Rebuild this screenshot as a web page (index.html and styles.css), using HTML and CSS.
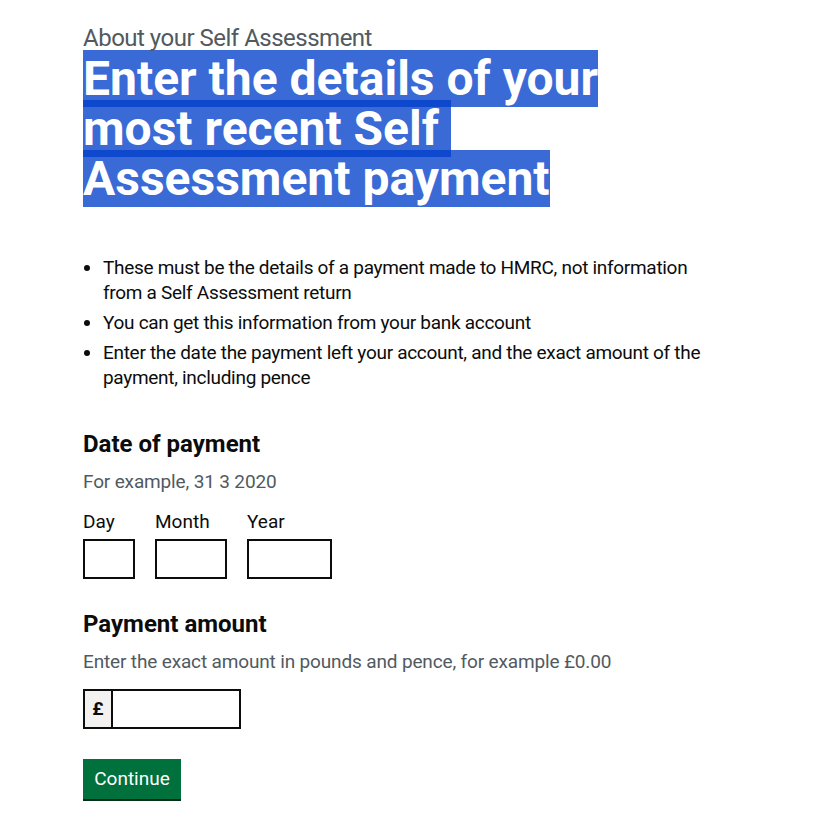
FILE: index.html
```html
<!DOCTYPE html>
<html lang="en">
<head>
<meta charset="utf-8">
<title>Enter the details of your most recent Self Assessment payment</title>
<link rel="stylesheet" href="styles.css">
</head>
<body>
<main class="page">
  <span class="caption">About your Self Assessment</span>
  <h1 class="heading">
    <span class="hl">Enter the details of your</span>
    <span class="hl">most recent Self </span>
    <span class="hl">Assessment payment</span>
  </h1>
  <ul class="bullets">
    <li>These must be the details of a payment made to HMRC, not information from a Self Assessment return</li>
    <li>You can get this information from your bank account</li>
    <li>Enter the date the payment left your account, and the exact amount of the payment, including pence</li>
  </ul>

  <fieldset class="fieldset">
    <legend class="legend">Date of payment</legend>
    <div class="hint">For example, 31 3 2020</div>
    <div class="date">
      <div class="date-item">
        <label class="label" for="d">Day</label>
        <input class="input w-day" id="d" type="text">
      </div>
      <div class="date-item">
        <label class="label" for="m">Month</label>
        <input class="input w-month" id="m" type="text">
      </div>
      <div class="date-item">
        <label class="label" for="y">Year</label>
        <input class="input w-year" id="y" type="text">
      </div>
    </div>
  </fieldset>

  <div class="group">
    <label class="legend" for="amt">Payment amount</label>
    <div class="hint hint-amt">Enter the exact amount in pounds and pence, for example £0.00</div>
    <div class="amount">
      <div class="prefix">£</div>
      <input class="input w-amount" id="amt" type="text">
    </div>
  </div>

  <button class="button" type="submit">Continue</button>
</main>
</body>
</html>
```

FILE: styles.css
```css
* { box-sizing: border-box; }
html, body { margin: 0; padding: 0; background: #fff; }
body {
  font-family: Roboto, "Liberation Sans", Arial, sans-serif;
  color: #0b0c0c;
}
.page {
  padding: 26px 0 0 83px;
}
.caption {
  display: block;
  font-size: 24px;
  line-height: 24px;
  letter-spacing: -0.5px;
  color: #505a5f;
  height: 28px;
}
.heading {
  margin: 0 0 51px 0;
  font-size: 48px;
  font-weight: 700;
  line-height: 50px;
  color: #fff;
}
.hl {
  display: block;
  width: fit-content;
  height: 50px;
  background: rgba(0, 62, 202, 0.773);
  box-shadow: 0 -4px 0 rgba(0, 62, 202, 0.773), 0 3px 0 rgba(0, 62, 202, 0.773);
  white-space: pre;
}
.bullets {
  margin: 0 0 39px 0;
  padding: 0 0 0 20px;
  font-size: 19px;
  line-height: 25px;
  letter-spacing: -0.3px;
  width: 640px;
}
.bullets li { margin-bottom: 5px; }
.bullets li:last-child { margin-bottom: 0; }
.fieldset {
  margin: 0;
  padding: 0;
  border: 0;
}
.legend {
  display: block;
  padding: 0;
  font-size: 24px;
  font-weight: 700;
  line-height: 30px;
  margin: 0 0 10px 0;
}
.hint {
  font-size: 19px;
  line-height: 25px;
  letter-spacing: -0.15px;
  color: #505a5f;
  margin-bottom: 15px;
}
.date {
  display: flex;
  gap: 20px;
}
.date-item {
  display: flex;
  flex-direction: column;
}
.label {
  font-size: 19px;
  line-height: 25px;
  margin-bottom: 5px;
}
.input {
  height: 40px;
  border: 2px solid #0b0c0c;
  border-radius: 0;
  padding: 5px;
  font: inherit;
  font-size: 19px;
  margin: 0;
  background: #fff;
}
.w-day { width: 52px; }
.w-month { width: 72px; }
.w-year { width: 85px; }
.group { margin-top: 30px; }
.hint-amt { margin-bottom: 15px; }
.amount { display: flex; }
.prefix {
  height: 40px;
  width: 28px;
  border: 2px solid #0b0c0c;
  border-right: 0;
  background: #f3f2f1;
  font-size: 19px;
  font-weight: 700;
  line-height: 36px;
  text-align: center;
}
.w-amount { width: 130px; }
.button {
  display: block;
  margin-top: 30px;
  width: 98px;
  height: 40px;
  padding: 0 0 2px 0;
  border: 0;
  border-radius: 0;
  background: #00703c;
  box-shadow: 0 2px 0 #002d18;
  color: #fff;
  font-family: inherit;
  font-size: 19px;
  line-height: 25px;
  margin-bottom: 2px;
}
```
